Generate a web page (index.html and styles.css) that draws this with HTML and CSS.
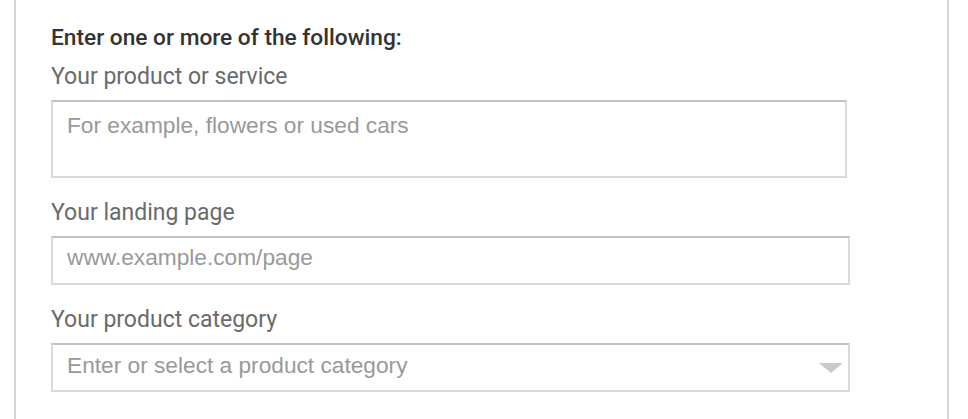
FILE: index.html
```html
<!DOCTYPE html>
<html lang="en">
<head>
  <meta charset="UTF-8" />
  <title>Keyword Ideas</title>
  <link rel="stylesheet" href="styles.css">
</head>
<body>
  <div class="panel">
    <h2 class="title">Enter one or more of the following:</h2>

    <div class="field">
      <label for="product">Your product or service</label>
      <textarea id="product" class="box box-area" placeholder="For example, flowers or used cars"></textarea>
    </div>

    <div class="field">
      <label for="landing">Your landing page</label>
      <input type="text" id="landing" class="box box-line" placeholder="www.example.com/page" />
    </div>

    <div class="field">
      <label for="category">Your product category</label>
      <div class="combo">
        <input type="text" id="category" placeholder="Enter or select a product category" />
        <svg class="caret" width="24" height="10" viewBox="0 0 24 10">
          <polygon points="0,0 24,0 12,10" fill="#c9c9c9" />
        </svg>
      </div>
    </div>
  </div>
</body>
</html>
```

FILE: styles.css
```css
* {
  box-sizing: border-box;
}

body {
  margin: 0;
  background: #fff;
  font-family: Roboto, 'Liberation Sans', sans-serif;
}

.panel {
  margin-left: 14px;
  width: 935px;
  min-height: 419px;
  border-left: 2px solid #d4d4d4;
  border-right: 2px solid #d4d4d4;
  padding: 25px 0 0 35px;
}

.title {
  margin: 0 0 13px;
  font-size: 22.7px;
  line-height: 26px;
  font-weight: 500;
  color: #333;
}

.field {
  margin-bottom: 22px;
}

.field label {
  display: block;
  margin-bottom: 10px;
  font-size: 23px;
  line-height: 26px;
  color: #6a6a6a;
}

.box,
.combo {
  display: block;
  border: 2px solid #dadada;
  border-top-color: #c3c3c3;
  background: #fff;
  font-family: 'Liberation Sans', Arial, sans-serif;
  font-size: 22.7px;
  color: #333;
}

.box::placeholder,
.combo input::placeholder {
  color: #999;
  opacity: 1;
}

.box-area {
  width: 796px;
  height: 78px;
  padding: 10px 14px 0;
  line-height: 26px;
  resize: none;
  font-family: 'Liberation Sans', Arial, sans-serif;
  font-size: 22.7px;
}

.box-line {
  width: 799px;
  height: 49px;
  padding: 0 14px 6px;
}

.combo {
  width: 799px;
  height: 49px;
  display: flex;
  align-items: center;
  padding: 0 5px 0 14px;
}

.combo input {
  flex: 1;
  border: none;
  outline: none;
  padding: 0 0 4px;
  background: transparent;
  font: inherit;
  color: #333;
}

.caret {
  display: block;
}
```
